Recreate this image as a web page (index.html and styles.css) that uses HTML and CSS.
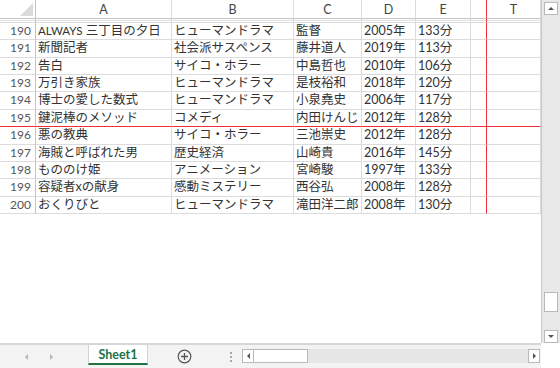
FILE: index.html
```html
<!DOCTYPE html>
<html lang="ja">
<head>
  <meta charset="UTF-8" />
  <title>Sheet1</title>
  <link rel="stylesheet" href="styles.css">
</head>
<body>
  <div class="sheet">
    <div class="main">
      <div class="grid">
        <div class="row head">
          <div class="corner"><span class="tri"></span></div>
          <div>A</div><div>B</div><div>C</div><div>D</div><div>E</div>
          <div class="fz"></div><div>T</div>
        </div>
        <div class="row band">
          <div class="rh"></div><div></div><div></div><div></div><div></div><div></div>
          <div class="fz"></div><div></div>
        </div>
        <div class="row">
          <div class="rh">190</div><div><span class="latin">ALWAYS</span> 三丁目の夕日</div><div>ヒューマンドラマ</div><div>監督</div><div>2005年</div><div>133分</div>
          <div class="fz"></div><div></div>
        </div>
        <div class="row">
          <div class="rh">191</div><div>新聞記者</div><div>社会派サスペンス</div><div>藤井道人</div><div>2019年</div><div>113分</div>
          <div class="fz"></div><div></div>
        </div>
        <div class="row">
          <div class="rh">192</div><div>告白</div><div>サイコ・ホラー</div><div>中島哲也</div><div>2010年</div><div>106分</div>
          <div class="fz"></div><div></div>
        </div>
        <div class="row">
          <div class="rh">193</div><div>万引き家族</div><div>ヒューマンドラマ</div><div>是枝裕和</div><div>2018年</div><div>120分</div>
          <div class="fz"></div><div></div>
        </div>
        <div class="row">
          <div class="rh">194</div><div>博士の愛した数式</div><div>ヒューマンドラマ</div><div>小泉堯史</div><div>2006年</div><div>117分</div>
          <div class="fz"></div><div></div>
        </div>
        <div class="row split">
          <div class="rh">195</div><div>鍵泥棒のメソッド</div><div>コメディ</div><div>内田けんじ</div><div>2012年</div><div>128分</div>
          <div class="fz"></div><div></div>
        </div>
        <div class="row">
          <div class="rh">196</div><div>悪の教典</div><div>サイコ・ホラー</div><div>三池崇史</div><div>2012年</div><div>128分</div>
          <div class="fz"></div><div></div>
        </div>
        <div class="row">
          <div class="rh">197</div><div>海賊と呼ばれた男</div><div>歴史経済</div><div>山崎貴</div><div>2016年</div><div>145分</div>
          <div class="fz"></div><div></div>
        </div>
        <div class="row">
          <div class="rh">198</div><div>もののけ姫</div><div>アニメーション</div><div>宮崎駿</div><div>1997年</div><div>133分</div>
          <div class="fz"></div><div></div>
        </div>
        <div class="row">
          <div class="rh">199</div><div>容疑者xの献身</div><div>感動ミステリー</div><div>西谷弘</div><div>2008年</div><div>128分</div>
          <div class="fz"></div><div></div>
        </div>
        <div class="row">
          <div class="rh">200</div><div>おくりびと</div><div>ヒューマンドラマ</div><div>滝田洋二郎</div><div>2008年</div><div>130分</div>
          <div class="fz"></div><div></div>
        </div>
      </div>

      <div class="vscroll">
        <div class="sbtn up"><span class="arr-up"></span></div>
        <div class="vtrack"><div class="vthumb"></div></div>
        <div class="sbtn down"><span class="arr-down"></span></div>
      </div>
    </div>

    <div class="bottom">
      <div class="tabbar">
        <div class="nav">
          <span class="arr-left light"></span>
          <span class="arr-right light"></span>
        </div>
        <div class="tab">Sheet1</div>
        <div class="add">
          <svg width="15" height="15" viewBox="0 0 15 15">
            <circle cx="7.5" cy="7.5" r="6.3" fill="none" stroke="#555" stroke-width="1.2"/>
            <path d="M7.5 4v7M4 7.5h7" stroke="#555" stroke-width="1.3"/>
          </svg>
        </div>
        <div class="dots"><i></i><i></i><i></i></div>
        <div class="hscroll">
          <div class="sbtn left"><span class="arr-left"></span></div>
          <div class="hthumb"></div>
          <div class="htrack"></div>
          <div class="sbtn right"><span class="arr-right"></span></div>
        </div>
      </div>
      <div class="corner-fill"></div>
    </div>
  </div>
</body>
</html>
```

FILE: styles.css
```css
:root {
  --grid-line: #dcdcdc;
  --head-line: #c4c4c4;
  --freeze: #ee2d36;
  --text: #333;
  --green: #217346;
  --scroll-bg: #e8e8e8;
  --btn-border: #b9b9b9;
}

body {
  margin: 0;
  background: #fff;
  color: var(--text);
  font-family: Lato, "Noto Sans CJK JP", sans-serif;
  font-size: 12.5px;
}

.sheet {
  width: 560px;
  height: 368px;
  display: flex;
  flex-direction: column;
  overflow: hidden;
}

.main {
  display: flex;
  height: 343px;
}

.grid {
  width: 541px;
}

.row {
  display: grid;
  grid-template-columns: 36px 136px 122px 68px 54px 55px 16px 54px;
  height: 17.36px;
}
.row > div {
  box-sizing: border-box;
  border-right: 1px solid var(--grid-line);
  border-bottom: 1px solid var(--grid-line);
  padding-left: 2px;
  white-space: nowrap;
  overflow: hidden;
  line-height: 16px;
}
.latin {
  font-size: 11.5px;
}
.row .rh {
  text-align: right;
  padding-right: 4px;
  color: #555;
  font-size: 12px;
  border-right-color: var(--head-line);
}
.row .fz {
  border-right-color: var(--freeze);
}
.row.split > div {
  border-bottom-color: var(--freeze);
}

.row.head {
  height: 19px;
}
.row.head > div {
  text-align: center;
  color: #444;
  padding-left: 0;
  line-height: 19px;
  border-bottom-color: var(--head-line);
}
.row.head .corner {
  position: relative;
  border-right-color: var(--head-line);
}
.corner .tri {
  position: absolute;
  right: 2px;
  bottom: 2px;
  width: 0;
  height: 0;
  border-left: 13px solid transparent;
  border-bottom: 13px solid #dadada;
}

.row.band {
  height: 4px;
}
.row.band > div {
  background: linear-gradient(#fff 1px, #e2e2e2 1px, #e2e2e2 2px, #fff 2px);
}

/* vertical scrollbar */
.vscroll {
  width: 19px;
  background: var(--scroll-bg);
  border-left: 1px solid #c9c9c9;
  box-sizing: border-box;
  display: flex;
  flex-direction: column;
  align-items: center;
  padding: 2px 0 0;
}
.sbtn {
  box-sizing: border-box;
  width: 14px;
  height: 13px;
  background: #fff;
  border: 1px solid var(--btn-border);
  display: flex;
  align-items: center;
  justify-content: center;
}
.vtrack {
  flex: 1;
  position: relative;
  width: 14px;
}
.vthumb {
  position: absolute;
  left: 0;
  right: 0;
  top: 277px;
  height: 20px;
  box-sizing: border-box;
  background: #fff;
  border: 1px solid var(--btn-border);
}

.arr-up, .arr-down, .arr-left, .arr-right {
  width: 0;
  height: 0;
  display: block;
}
.arr-up {
  border-left: 3px solid transparent;
  border-right: 3px solid transparent;
  border-bottom: 3px solid #555;
}
.arr-down {
  border-left: 3px solid transparent;
  border-right: 3px solid transparent;
  border-top: 3px solid #555;
}
.arr-left {
  border-top: 3px solid transparent;
  border-bottom: 3px solid transparent;
  border-right: 3px solid #555;
}
.arr-right {
  border-top: 3px solid transparent;
  border-bottom: 3px solid transparent;
  border-left: 3px solid #555;
}
.arr-left.light { border-right-color: #b5b5b5; }
.arr-right.light { border-left-color: #b5b5b5; }

/* sheet tabs */
.bottom {
  display: flex;
  height: 25px;
}
.tabbar {
  width: 541px;
  display: flex;
  align-items: stretch;
  border-top: 2px solid #d6d6d6;
  box-sizing: border-box;
  background: #f3f3f3;
}
.corner-fill {
  flex: 1;
  background: #fff;
}
.nav {
  width: 88px;
  display: flex;
  align-items: center;
  gap: 22px;
  padding-left: 25px;
  box-sizing: border-box;
}
.tab {
  width: 60px;
  box-sizing: border-box;
  background: #fff;
  border-left: 1px solid #d2d2d2;
  border-right: 1px solid #d2d2d2;
  border-bottom: 2px solid var(--green);
  margin-bottom: 3px;
  color: var(--green);
  font-weight: bold;
  font-size: 12.5px;
  text-align: center;
  line-height: 20px;
}
.add {
  width: 72px;
  display: flex;
  align-items: center;
  justify-content: center;
}
.dots {
  width: 22px;
  display: flex;
  flex-direction: column;
  align-items: center;
  justify-content: center;
  gap: 2px;
}
.dots i {
  width: 2px;
  height: 2px;
  background: #a8a8a8;
}
.hscroll {
  flex: 1;
  display: flex;
  align-items: center;
  padding: 0 1px 2px 0;
}
.hscroll .sbtn {
  width: 12px;
  height: 14px;
}
.hthumb {
  width: 54px;
  height: 14px;
  box-sizing: border-box;
  background: #fff;
  border: 1px solid var(--btn-border);
  border-left: none;
}
.htrack {
  flex: 1;
  height: 14px;
  background: #e6e6e6;
}
```
